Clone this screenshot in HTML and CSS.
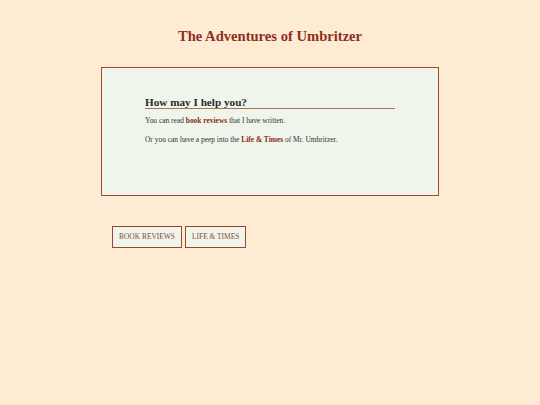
FILE: index.html
```html
<!DOCTYPE html>
<html>
<head>
<meta charset="utf-8">
<link rel="stylesheet" href="styles.css">
</head>
<body>
<div class="page">
  <h1 class="title">The Adventures of Umbritzer</h1>
  <div class="panel">
    <div class="panel-inner">
      <h2 class="heading">How may I help you?</h2>
      <p class="text">You can read <a class="link" href="#">book reviews</a> that I have written.</p>
      <p class="text">Or you can have a peep into the <a class="link" href="#">Life &amp; Times</a> of Mr. Umbritzer.</p>
    </div>
  </div>
  <div class="buttons">
    <a class="btn" href="#">BOOK REVIEWS</a>
    <a class="btn" href="#">LIFE &amp; TIMES</a>
  </div>
</div>
</body>
</html>
```
FILE: styles.css
```css
html, body {
  margin: 0;
  padding: 0;
  background: #fdebd4;
}
body {
  font-family: "Liberation Serif", "Times New Roman", serif;
  color: #333;
}
.page {
  width: 338px;
  margin: 0 auto;
  padding-top: 28px;
}
.title {
  margin: 0;
  text-align: center;
  font-size: 14.6px;
  line-height: 17px;
  color: #8e2f1c;
  font-weight: bold;
}
.panel {
  margin-top: 22px;
  height: 127px;
  border: 1px solid #a04a36;
  background: #f0f5ec;
}
.panel-inner {
  width: 250px;
  padding: 28px 0 0 43px;
}
.heading {
  margin: 0;
  font-size: 11.2px;
  line-height: 12px;
  color: #2b2b2b;
  border-bottom: 1px solid #a8725f;
}
.text {
  margin: 7px 0 0 0;
  font-size: 7.45px;
  line-height: 10px;
  color: #333;
}
.text + .text {
  margin-top: 9px;
}
.link {
  color: #8b2a1a;
  font-weight: bold;
  text-decoration: none;
}
.buttons {
  display: flex;
  gap: 3px;
  margin-top: 30px;
  padding-left: 11px;
}
.btn {
  display: block;
  padding: 0 6px;
  height: 20px;
  line-height: 20px;
  border: 1px solid #9b4430;
  box-shadow: 0 1px 0 #c78f78;
  background: #f0f5ec;
  color: #8b4535;
  font-size: 7.45px;
  text-decoration: none;
}
```
